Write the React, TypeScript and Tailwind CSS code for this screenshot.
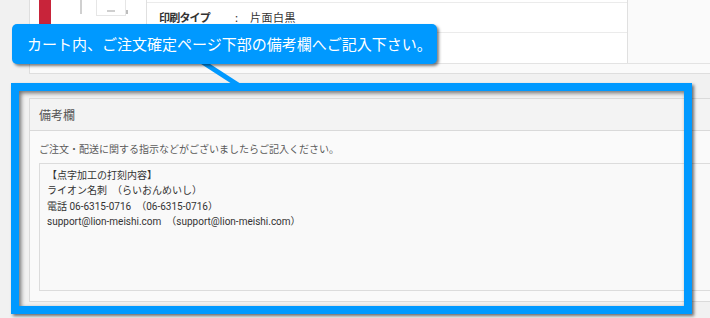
import React from 'react'

const jp = { fontFamily: '"Noto Sans CJK JP", "Noto Sans", sans-serif' }
const mixed = { fontFamily: 'Roboto, "Noto Sans CJK JP", sans-serif' }

const memo = `【点字加工の打刻内容】
ライオン名刺　（らいおんめいし）
電話 06-6315-0716　（06-6315-0716）
support@lion-meishi.com　（support@lion-meishi.com）`

function CartItem() {
  return (
    <div className="ml-[29px] border-l border-b border-[#dedede] bg-white">
      <div className="flex h-[64px] border-b border-[#e3e3e3]">
        <div className="w-[9px]" />
        <div className="w-[12px] bg-[#c8243a]" />
        {/* product thumbnail, cut off at the top */}
        <div className="w-[95px] flex">
          <div className="ml-[29px] w-[2px] h-[14px] bg-[#d0d0d0]" />
          <div className="ml-[14px] w-[30px] h-[16px] border-b border-l border-r border-[#e6e6e6] flex items-end justify-center pb-[3px]">
            <div className="w-[8px] h-[2px] bg-[#cfcfcf]" />
          </div>
          <div className="w-[2px] h-[4px] mt-[10px] bg-[#bdbdbd]" />
        </div>
        <div className="w-[482px] border-l border-r border-[#e0e0e0] text-[11px] text-[#333]" style={jp}>
          <div className="h-[3px] border-b border-[#ebebeb]" />
          <div className="h-[30px] flex items-center border-b border-[#ebebeb]">
            <span className="w-[88px] pl-[12px] font-bold tracking-[-0.8px]">印刷タイプ</span>
            <span className="w-[15px]">:</span>
            <span className="tracking-[0.5px]">片面白黒</span>
          </div>
          <div className="h-[30px]" />
        </div>
        <div className="flex-1 bg-[#fafafa]" />
      </div>
      <div className="h-[9px] bg-[#fafafa]" />
    </div>
  )
}

function MemoPanel() {
  return (
    <div className="ml-[29px] mt-[24px] w-[700px] border border-[#dadada] bg-[#fafafa]" style={jp}>
      <div className="h-[32px] flex items-center px-[9px] bg-[#f3f3f3] border-b border-[#d9d9d9] text-[12px] text-[#555]">
        備考欄
      </div>
      <div className="px-[9px] pt-[11px] pb-[10px]">
        <p className="text-[10px] leading-[14px] text-[#5a5a5a]">ご注文・配送に関する指示などがございましたらご記入ください。</p>
        <textarea
          readOnly
          defaultValue={memo}
          className="mt-[7px] block w-full h-[128px] resize-none border border-[#dcdcdc] bg-[#f9f9f9] pl-[7px] pt-[4px] text-[10px] leading-[15.3px] text-[#333] outline-none"
          style={mixed}
        />
      </div>
    </div>
  )
}

export default function App() {
  return (
    <div className="relative w-[710px] h-[318px] overflow-hidden bg-[#f1f1f1]">
      <CartItem />
      <MemoPanel />

      {/* highlight frame */}
      <div className="absolute left-[11px] top-[83px] w-[681px] h-[231px] border-[8px] border-[#0099ff] shadow-[2px_2px_3px_rgba(0,0,0,0.55),inset_2px_2px_4px_rgba(0,0,0,0.55)]" />

      {/* pointer */}
      <svg className="absolute left-0 top-0" width="710" height="318" viewBox="0 0 710 318">
        <polygon points="198,62 207,62 241,84 232,84" fill="#0099ff" />
      </svg>

      {/* callout */}
      <div
        className="absolute left-[12px] top-[24px] w-[425px] h-[40px] rounded-[5px] bg-[#0099ff] shadow-[2px_2px_3px_rgba(0,0,0,0.5)] flex items-center pl-[15px] text-[15px] text-white"
        style={jp}
      >
        カート内、ご注文確定ページ下部の備考欄へご記入下さい。
      </div>
    </div>
  )
}
